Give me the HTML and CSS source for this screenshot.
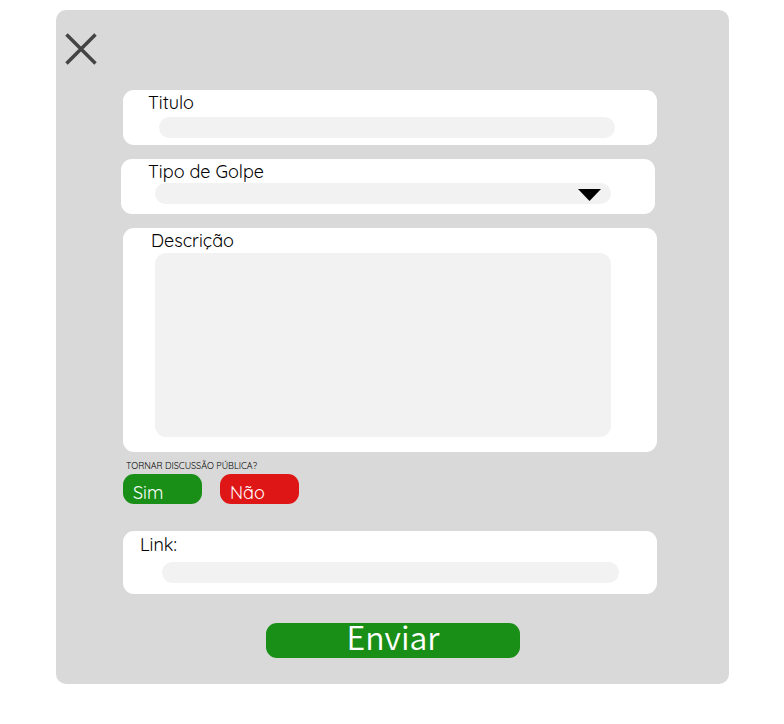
FILE: index.html
```html
<!DOCTYPE html>
<html lang="pt-BR">
<head>
<meta charset="utf-8">
<meta name="viewport" content="width=device-width, initial-scale=1">
<title>Nova discussão</title>
<link rel="stylesheet" href="styles.css">
</head>
<body>
<main class="panel">
  <button class="close" type="button" aria-label="Fechar">
    <svg viewBox="0 0 32 32" width="32" height="32" aria-hidden="true"><path d="M1.500 1.500 30.500 30.500M30.500 1.500 1.500 30.500" fill="none" stroke="#444" stroke-width="3.500"/></svg>
  </button>
  <form class="form">
    <div class="card card-title">
      <label for="titulo">Titulo</label>
      <input class="field" id="titulo" type="text">
    </div>
    <div class="card card-type">
      <label for="tipo">Tipo de Golpe</label>
      <div class="select-wrap">
        <select class="field" id="tipo"><option></option></select>
        <svg class="arrow" viewBox="0 0 24 12" width="24" height="12" aria-hidden="true"><path d="M1 0H24L12.500 12Z"/></svg>
      </div>
    </div>
    <div class="card card-description">
      <label for="descricao">Descrição</label>
      <textarea class="field" id="descricao"></textarea>
    </div>
    <div class="visibility" role="group" aria-labelledby="publica">
      <p class="question" id="publica">TORNAR DISCUSSÃO PÚBLICA?</p>
      <div class="choices">
        <button class="choice yes" type="button">Sim</button>
        <button class="choice no" type="button">Não</button>
      </div>
    </div>
    <div class="card card-link">
      <label for="link">Link:</label>
      <input class="field" id="link" type="text">
    </div>
    <button class="submit" type="submit">Enviar</button>
  </form>
</main>
</body>
</html>
```
FILE: styles.css
```css
* {
  box-sizing: border-box;
}

body {
  margin: 0;
  padding: 10px 55px 40px 56px;
  background: #fff;
  color: #000;
  font-family: Quicksand, Lato, sans-serif;
  font-size: 18px;
}

button,
input,
select,
textarea {
  display: block;
  margin: 0;
  padding: 0;
  border: 0;
  font: inherit;
}

.panel {
  padding: 23px 0 26px;
  border-radius: 10px;
  background: #d9d9d9;
}

.close {
  width: 32px;
  height: 32px;
  margin-left: 9px;
  background: none;
}

.close svg {
  display: block;
}

.form {
  display: flex;
  flex-direction: column;
  gap: 14px;
  padding: 25px 72px 0 67px;
}

.card {
  display: flex;
  flex-direction: column;
  padding-top: 1px;
  border-radius: 11px;
  background: #fff;
}

.card label {
  line-height: 23px;
}

.field {
  width: 100%;
  height: 21px;
  padding: 0 12px;
  border-radius: 11px;
  background: #f2f2f2;
}

.card-title {
  gap: 3px;
  padding: 1px 42px 7px 36px;
}

.card-title label {
  margin-left: -11px;
}

.card-type {
  margin: 0 2px 0 -2px;
  padding: 1px 44px 10px 34px;
}

.card-type label {
  margin-left: -7px;
}

.select-wrap {
  position: relative;
}

.select-wrap .field {
  appearance: none;
}

.arrow {
  position: absolute;
  top: 6px;
  right: 10px;
  pointer-events: none;
}

.card-description {
  gap: 1px;
  padding: 1px 46px 15px 32px;
}

.card-description label {
  margin-left: -4px;
}

.card-description .field {
  height: 184px;
  padding: 8px 12px;
  resize: none;
}

.visibility {
  display: flex;
  flex-direction: column;
  gap: 1px;
  margin: -7px 0 13px;
}

.question {
  margin: 0 0 0 3px;
  font-size: 9px;
  line-height: 14px;
}

.choices {
  display: flex;
  gap: 18px;
}

.choice {
  width: 79px;
  height: 30px;
  padding: 7px 0 0 10px;
  border-radius: 11px;
  color: #fff;
  line-height: 23px;
  text-align: left;
}

.yes {
  background: #1a8f18;
}

.no {
  background: #df1616;
}

.card-link {
  gap: 6px;
  padding: 2px 38px 11px 39px;
}

.card-link label {
  margin-left: -22px;
}

.submit {
  align-self: center;
  width: 254px;
  height: 35px;
  margin: 15px 0 0 6px;
  padding-bottom: 8px;
  border-radius: 11px;
  background: #1a8f18;
  color: #fff;
  font-family: "Noto Sans CJK SC", sans-serif;
  font-size: 32px;
  font-weight: 350;
  line-height: 27px;
}
```
